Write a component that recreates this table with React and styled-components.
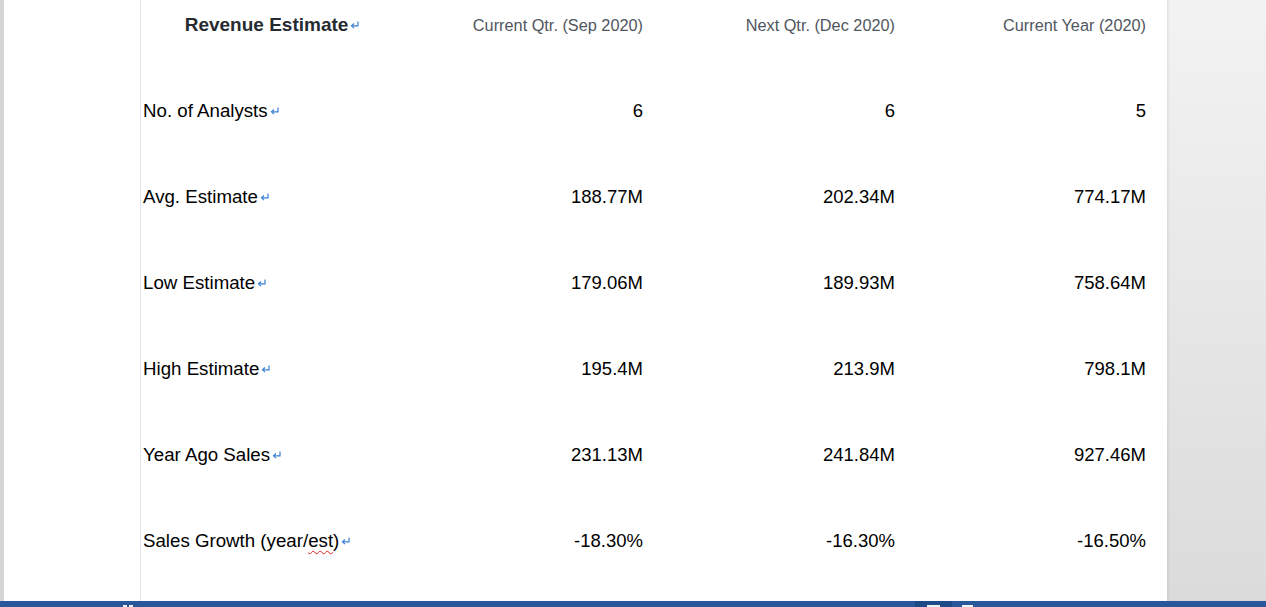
import React from "react";
import styled, { createGlobalStyle } from "styled-components";

const GlobalStyle = createGlobalStyle`
  html, body {
    margin: 0;
    padding: 0;
    background: #ffffff;
    overflow: hidden;
  }
  #root {
    width: 1266px;
    height: 607px;
  }
`;

const Window = styled.div`
  width: 1266px;
  height: 607px;
  display: flex;
  flex-direction: column;
  font-family: "Liberation Sans", Arial, sans-serif;
`;

const Workspace = styled.div`
  flex: 1;
  display: flex;
  min-height: 0;
`;

const EdgeStrip = styled.div`
  width: 4px;
  background: #d4d4d4;
`;

const Page = styled.div`
  width: 1163px;
  background: #ffffff;
  padding-left: 136px;
  box-sizing: border-box;
  display: flex;
`;

const Gutter = styled.div`
  flex: 1;
  background: linear-gradient(to bottom, #f3f3f3, #dbdbdb);
  box-shadow: inset 2px 0 2px rgba(0, 0, 0, 0.06);
`;

const Table = styled.div`
  flex: 1;
  border-left: 1px solid #dfe3ea;
  padding-top: 14px;
`;

const Row = styled.div`
  display: grid;
  grid-template-columns: 262px 244px 252px 251px;
  height: 86px;
  align-items: baseline;
`;

const Label = styled.div`
  padding-left: 2px;
  font-size: 18.7px;
  line-height: 22px;
  color: #000000;
  white-space: nowrap;
`;

const TitleCell = styled.div`
  text-align: center;
  font-size: 19px;
  line-height: 22px;
  font-weight: bold;
  color: #262b31;
  white-space: nowrap;
`;

const Cell = styled.div`
  text-align: right;
  padding-right: 4px;
  white-space: nowrap;
  font-size: ${(p) => (p.$head ? "16.3px" : "18.5px")};
  line-height: 22px;
  color: ${(p) => (p.$head ? "#50565e" : "#000000")};
`;

const Misspelled = styled.span`
  text-decoration: underline wavy #e02424;
  text-decoration-thickness: 1px;
  text-underline-offset: 3px;
  text-decoration-skip-ink: none;
`;

const Mark = styled.svg`
  width: 9px;
  height: 8px;
  margin-left: 2px;
  vertical-align: 2px;
`;

const StatusBar = styled.div`
  height: 6px;
  background: #2a579a;
  display: flex;
  align-items: flex-end;
`;

const StatusTab = styled.div`
  width: ${(p) => p.$w}px;
  height: 6px;
  margin-left: ${(p) => p.$ml}px;
  background: ${(p) => (p.$dark ? "#1f4a88" : "transparent")};
  display: flex;
  align-items: flex-end;
  gap: 2px;
`;

const StatusGlyph = styled.div`
  width: ${(p) => p.$w}px;
  height: 2px;
  margin-left: ${(p) => p.$ml || 0}px;
  background: #eef2f8;
`;

const ReturnMark = () => (
  <Mark viewBox="0 0 9 8">
    <path d="M8 0.5 V4.8 H1.8" fill="none" stroke="#3b7fd4" strokeWidth="1.2" />
    <path d="M4 2.5 L1.5 4.8 L4 7.1" fill="none" stroke="#3b7fd4" strokeWidth="1.2" />
  </Mark>
);

const rows = [
  { label: "No. of Analysts", values: ["6", "6", "5"] },
  { label: "Avg. Estimate", values: ["188.77M", "202.34M", "774.17M"] },
  { label: "Low Estimate", values: ["179.06M", "189.93M", "758.64M"] },
  { label: "High Estimate", values: ["195.4M", "213.9M", "798.1M"] },
  { label: "Year Ago Sales", values: ["231.13M", "241.84M", "927.46M"] },
  {
    label: (
      <>
        Sales Growth (year/<Misspelled>est</Misspelled>)
      </>
    ),
    values: ["-18.30%", "-16.30%", "-16.50%"],
  },
];

const App = () => {
  return (
    <Window>
      <GlobalStyle />
      <Workspace>
        <EdgeStrip />
        <Page>
          <Table>
            <Row>
              <TitleCell>
                Revenue Estimate
                <ReturnMark />
              </TitleCell>
              <Cell $head>Current Qtr. (Sep 2020)</Cell>
              <Cell $head>Next Qtr. (Dec 2020)</Cell>
              <Cell $head>Current Year (2020)</Cell>
            </Row>
            {rows.map((row, i) => (
              <Row key={i}>
                <Label>
                  {row.label}
                  <ReturnMark />
                </Label>
                {row.values.map((v, j) => (
                  <Cell key={j}>{v}</Cell>
                ))}
              </Row>
            ))}
          </Table>
        </Page>
        <Gutter />
      </Workspace>
      <StatusBar>
        <StatusTab $w={12} $ml={123}>
          <StatusGlyph $w={4} />
          <StatusGlyph $w={4} />
        </StatusTab>
        <StatusTab $w={37} $ml={780} $dark>
          <StatusGlyph $w={13} $ml={12} />
        </StatusTab>
        <StatusTab $w={12} $ml={10}>
          <StatusGlyph $w={11} />
        </StatusTab>
      </StatusBar>
    </Window>
  );
};

export default App;
